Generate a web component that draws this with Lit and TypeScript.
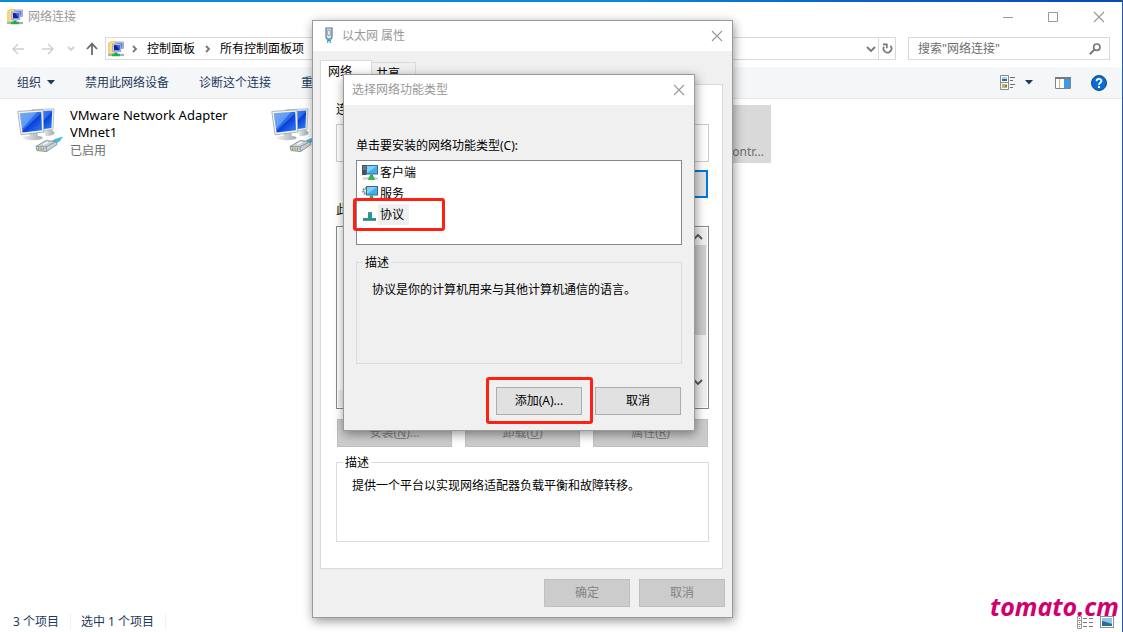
import { LitElement, html, css, svg, nothing } from "lit";
import { customElement, property } from "lit/decorators.js";

const chevron = (d: string, cls: string, w = 8, h = 8) => html`
  <svg class=${cls} width=${w} height=${h} viewBox="0 0 ${w} ${h}" aria-hidden="true">
    <path d=${d} fill="none" stroke="currentColor" stroke-width="1.8" />
  </svg>`;

const folderIcon = html`
  <svg width="16" height="16" viewBox="0 0 16 16" aria-hidden="true">
    <path d="M0.5 1.5 L4 .5 V12.5 L.5 13.5Z" fill="#e9c85b" />
    <path d="M3 .5 H8 V13 H1 V2Z" fill="#f6e08a" stroke="#d9bb55" stroke-width=".6" />
    <rect x="8" y="1" width="7.5" height="6.5" fill="#c9d2ea" stroke="#8793b5" stroke-width=".7" />
    <rect x="9.5" y="2.2" width="5" height="4.4" fill="#5b7bdc" />
    <rect x="4.8" y="3" width="8" height="7.4" fill="#d6ddf0" stroke="#7c88aa" stroke-width=".7" />
    <rect x="6" y="4" width="5.6" height="5.4" fill="#1020b8" />
    <path d="M8 4 H11.6 V9Z" fill="#3a63ea" />
    <rect x="7" y="10" width="3" height="2" fill="#c3cadb" />
    <path d="M0 14 H16" stroke="#a9b0b5" stroke-width="2.2" />
    <path d="M4 14 H12" stroke="#19b662" stroke-width="2.4" />
    <path d="M8 11.6 V15" stroke="#19a657" stroke-width="3" />
  </svg>`;

const adapterIcon = html`
  <svg width="46" height="46" viewBox="0 0 46 46" aria-hidden="true">
    <defs>
      <linearGradient id="scr" x1="0" y1="0" x2="1" y2="1">
        <stop offset="0" stop-color="#4f8ff2" />
        <stop offset=".5" stop-color="#2a6bec" />
        <stop offset=".54" stop-color="#0b3fd6" />
        <stop offset="1" stop-color="#2f8af8" />
      </linearGradient>
      <linearGradient id="stand" x1="0" y1="0" x2="1" y2="0">
        <stop offset="0" stop-color="#eef0f1" />
        <stop offset="1" stop-color="#a4a9ae" />
      </linearGradient>
    </defs>
    <path d="M26 24 L34 21 L37 24 C39 26 35 28 29 28Z" fill="url(#stand)" />
    <path d="M15 1.8 L37 .8 L36 21.5 L18 24Z" fill="#eceeef" stroke="#a5abb0" stroke-width=".7" />
    <path d="M17 3.6 L35.2 2.6 L34.4 20 L19 22Z" fill="url(#scr)" />
    <path d="M12 24 L20 23 L21 28 C28 28.6 27 31.6 19 32 C9 32.8 4 31 6 28.8 L13 27.6Z" fill="url(#stand)" />
    <path d="M.8 3.4 L26 1.8 L26.8 24 L4 26.8Z" fill="#f3f4f5" stroke="#9aa1a7" stroke-width=".8" />
    <path d="M2.8 5.2 L24.2 3.8 L25 22.2 L5.6 24.6Z" fill="url(#scr)" />
    <path d="M2.8 5.2 L20 4 L6 20 L5 20Z" fill="#b5dcff" opacity=".38" />
    <path d="M33 34 L38 31 L46 28.6 L43 33 L38 36Z" fill="#45b9e6" />
    <path d="M19 38.4 L29 32.6 L39 33.4 L40 36.5 L29.6 43.6 L20 42.6Z" fill="#c9d1d7" stroke="#7a868f" stroke-width=".8" />
    <path d="M19 38.4 L29 38.8 L39 33.6 M29 38.8 L29.6 43.4" fill="none" stroke="#7f8b94" stroke-width=".8" />
    <path d="M21.6 39.6 V42 M24 39.8 V42.2 M26.4 40 V42.6" stroke="#b0963a" stroke-width="1.1" />
    <path d="M26 36.6 L31 34" stroke="#f4f7f8" stroke-width="1.5" />
  </svg>`;

const plugIcon = html`
  <svg width="12" height="18" viewBox="0 0 12 18" aria-hidden="true">
    <path d="M3 1 H9 V10 L8 12 H4 L3 10Z" fill="#dbe6f0" stroke="#5d7388" stroke-width="1.2" />
    <rect x="4.8" y="3.2" width="2.4" height="5" fill="#fff" stroke="#6f8ba5" stroke-width=".8" />
    <path d="M4 12.5 H8 V14 H4Z" fill="#2f7fae" />
    <path d="M4.7 13 V16 M7.3 13 V16" stroke="#3fb2da" stroke-width="1.4" />
  </svg>`;

const screen = svg`
  <rect x="4.5" y=".5" width="11" height="8.5" fill="#3fb0f2" stroke="#3c6a85" stroke-width="1" />
  <path d="M5 1 H15 L5 8Z" fill="#7fd0fa" />
  <path d="M8 9.5 V12 H11 V9.5Z" fill="#2fa64a" />
  <path d="M7 11.5 H12 L13 15 H6Z" fill="#39b551" />`;

const featureIcons: Record<string, unknown> = {
  client: html`<svg width="16" height="16" viewBox="0 0 16 16" aria-hidden="true">
    <rect x="0" y="0" width="4.5" height="10" fill="#4a5257" />
    <path d="M1 2 H4 M1 4 H4" stroke="#9fb4bd" stroke-width=".8" />
    <rect x="1" y="12.5" width="15" height="2" fill="#c9cccd" />
    ${screen}
  </svg>`,
  service: html`<svg width="16" height="16" viewBox="0 0 16 16" aria-hidden="true">
    <circle cx="4" cy="5" r="3" fill="none" stroke="#8b979e" stroke-width="2" stroke-dasharray="1.6 1" />
    <circle cx="4" cy="5" r="2.2" fill="#eef1f2" stroke="#8b979e" />
    <rect x="1" y="12.5" width="15" height="2" fill="#c9cccd" />
    ${screen}
  </svg>`,
  protocol: html`<svg width="16" height="16" viewBox="0 0 16 16" aria-hidden="true">
    <path d="M6 5 H10 V11 H14 V13.5 H1 V11 H6Z" fill="#219a91" />
    <path d="M6 5 H10 V6.5 H6Z" fill="#5a8b97" />
    <path d="M1 12.4 H14 V13.6 H1Z" fill="#3f7890" />
  </svg>`,
};

const shared = css`
  * { box-sizing: border-box; }
  button, input {
    font: inherit;
    color: inherit;
    margin: 0;
    padding: 0;
    border: 0;
    border-radius: 0;
    background: none;
  }
  svg { display: block; flex: none; }
`;

@customElement("dialog-window")
class DialogWindow extends LitElement {
  @property() heading = "";
  @property({ type: Boolean }) plug = false;

  static styles = [shared, css`
    :host {
      display: block;
      border: 1px solid #9a9a9a;
      background: #f0f0f0;
      box-shadow: 1px 3px 10px rgba(0, 0, 0, 0.42);
    }
    .title {
      display: flex;
      align-items: center;
      gap: 7px;
      height: 30px;
      padding: 0 9px 1px 8px;
      background: #fff;
      color: #999;
    }
    .plugged { padding-left: 10px; }
    .name { flex: 1; }
    .close { display: flex; color: #999; }
  `];

  render() {
    return html`
      <header class="title ${this.plug ? "plugged" : ""}">
        ${this.plug ? plugIcon : nothing}
        <span class="name">${this.heading}</span>
        <button class="close" aria-label="关闭">
          <svg width="12" height="12" viewBox="0 0 12 12">
            <path d="M1 1 L11 11 M11 1 L1 11" stroke="currentColor" stroke-width="1.1" />
          </svg>
        </button>
      </header>
      <slot></slot>`;
  }
}

@customElement("app-root")
class AppRoot extends LitElement {
  static styles = [shared, css`
    :host {
      display: flex;
      flex-direction: column;
      position: relative;
      height: 100vh;
      overflow: hidden;
      background: #fff;
      border-right: 1px solid #2458a8;
      box-sizing: border-box;
      font: 12px/16px "Noto Sans", "Noto Sans CJK SC", sans-serif;
      color: #000;
    }
    .strip {
      flex: none;
      height: 2px;
      background: linear-gradient(90deg, #0a8bd8, #0a8ad6 55%, #0a62cc 75%, #0c48b4);
    }
    .titlebar {
      display: flex;
      align-items: center;
      flex: none;
      gap: 5px;
      height: 29px;
      padding: 0 17px 0 7px;
      color: #999;
    }
    .caption { flex: 1; }
    .sys { display: flex; gap: 34px; }
    .nav {
      display: flex;
      align-items: center;
      flex: none;
      height: 36px;
      padding: 0 12px 1px;
    }
    .moves {
      display: flex;
      align-items: center;
      color: #d0d0d0;
      margin-right: 7px;
    }
    .fwd { margin-left: 18px; }
    .recent { margin-left: 13px; }
    .up { margin-left: 11px; color: #6b6b6b; }
    .address {
      display: flex;
      align-items: center;
      flex: 1;
      height: 23px;
      border: 1px solid #d9d9d9;
      padding-left: 2px;
    }
    .crumbs { display: flex; align-items: center; flex: 1; }
    .crumb { margin: 0 9px 0 8px; color: #000; text-decoration: none; }
    .sep { color: #777; }
    .first { margin-left: 7px; }
    .drop { color: #777; margin-right: 2px; }
    .refresh {
      display: grid;
      place-items: center;
      width: 17px;
      height: 100%;
      border-left: 1px solid #d9d9d9;
      color: #777;
    }
    .search {
      display: flex;
      align-items: center;
      width: 202px;
      height: 23px;
      margin-left: 12px;
      padding: 0 8px 0 9px;
      border: 1px solid #d9d9d9;
    }
    .query { flex: 1; min-width: 0; outline: 0; }
    .query::placeholder { color: #6d6d6d; opacity: 1; }
    .toolbar {
      display: flex;
      align-items: center;
      flex: none;
      height: 32px;
      padding: 0 15px 0 17px;
      background: #f5f6f7;
      border-bottom: 1px solid #e6e9ec;
      color: #1e395b;
    }
    .commands { display: flex; flex: 1; gap: 30px; }
    .cmd { display: flex; align-items: center; gap: 6px; white-space: nowrap; }
    .views { display: flex; align-items: center; }
    .more { margin: 0 22px 0 9px; }
    .help { margin-left: 20px; }
    .files {
      display: flex;
      align-items: flex-start;
      flex: 1;
      gap: 1px;
      padding: 6px 10px;
    }
    .file {
      display: flex;
      gap: 7px;
      width: 253px;
      height: 58px;
      padding: 3px 7px;
      line-height: 17px;
    }
    .file-name { font-size: 13px; margin: -1px 0 1px; padding-right: 8px; }
    .file-state { color: #6d6d6d; }
    .picked { background: #d9d9d9; justify-content: flex-end; align-items: flex-end; }
    .status {
      display: flex;
      align-items: center;
      flex: none;
      height: 20px;
      padding: 0 8px 0 13px;
      color: #1e395b;
    }
    .count { padding-right: 11px; margin-right: 10px; border-right: 1px solid #f1f1f1; }
    .modes { display: flex; align-items: center; gap: 7px; margin-left: auto; }
    .brand {
      position: absolute;
      right: 3px;
      bottom: 12px;
      font: italic 700 25px/28px "Open Sans", "Noto Sans", sans-serif;
      color: #d1006c;
    }

    .props { position: absolute; left: 312px; top: 20px; width: 421px; }
    .feature { position: absolute; left: 343px; top: 74px; width: 352px; }

    .sheet { padding: 9px 7px 10px; }
    .tabs { display: flex; align-items: flex-end; }
    .tab {
      height: 22px;
      padding: 0 15px 0 4px;
      border: 1px solid #d9d9d9;
      border-width: 1px 1px 0 0;
    }
    .on {
      height: 25px;
      margin-bottom: -1px;
      padding: 0 19px 2px 7px;
      border-left-width: 1px;
      background: #fff;
      position: relative;
    }
    .page {
      display: flex;
      flex-direction: column;
      margin-right: 2px;
      padding: 17px 13px 26px 15px;
      border: 1px solid #d9d9d9;
      background: #fff;
    }
    .device {
      width: 100%;
      height: 38px;
      margin: 6px 0 8px;
      border: 1px solid #ccc;
    }
    .config {
      align-self: flex-end;
      width: 86px;
      height: 28px;
      margin: 0 1px 4px 0;
      border: 2px solid #0078d7;
      background: #e1e1e1;
    }
    .items {
      display: grid;
      grid-template-columns: 1fr 17px;
      grid-template-rows: 1fr 17px;
      height: 183px;
      margin-top: 8px;
      padding: 1px;
      border: 1px solid #828790;
    }
    .bar {
      display: flex;
      flex-direction: column;
      align-items: center;
      background: #f0f0f0;
      color: #555;
      padding: 5px 1px 4px 0;
    }
    .thumb { width: 100%; height: 90px; margin: 4px 0 auto; background: #cdcdcd; }
    .track { grid-column: 1 / 3; background: #f0f0f0; }
    .actions { display: grid; grid-template-columns: repeat(3, 1fr); gap: 13px; margin: 10px 1px 8px; }
    .btn {
      height: 28px;
      border: 1px solid #adadad;
      background: #e1e1e1;
      text-align: center;
    }
    .btn:disabled { border-color: #bfbfbf; background: #ccc; color: #838383; }
    .group {
      min-width: 0;
      margin: 0;
      padding: 0 6px;
      border: 1px solid #dcdcdc;
    }
    .legend { padding: 0 2px; line-height: 15px; }
    .about { margin: 0; padding: 8px 9px; }
    .page .group { height: 87px; }
    .foot { display: flex; justify-content: flex-end; gap: 9px; margin-top: 10px; }
    .foot .btn { width: 86px; }

    .picker { padding: 33px 12px 15px; }
    .options {
      list-style: none;
      height: 85px;
      margin: 6px 0 10px;
      padding: 1px 5px;
      border: 1px solid #828790;
      background: #fff;
    }
    .option { display: flex; align-items: center; height: 21px; position: relative; }
    .word { padding: 3px 5px 2px 2px; }
    .chosen .word { background: #f0f0f0; }
    .picker .group { height: 109px; }
    .picker .about { padding-top: 12px; }
    .picker .foot { gap: 13px; margin: 23px 1px 0 0; }
    .add { position: relative; }
    .mark {
      position: absolute;
      border: 3px solid #ff2014;
      border-radius: 3px;
      pointer-events: none;
    }
    .around-option { left: -9px; top: -6px; width: 92px; height: 33px; }
    .around-add { inset: -11px -12px -10px -11px; }
  `];

  private files = ["VMware Network Adapter VMnet1", "VMware Network Adapter VMnet8"];
  private features = [
    { icon: "client", name: "客户端" },
    { icon: "service", name: "服务" },
    { icon: "protocol", name: "协议", chosen: true },
  ];

  private explorer() {
    return html`
      <div class="strip"></div>
      <header class="titlebar">
        ${folderIcon}
        <span class="caption">网络连接</span>
        <div class="sys">
          <button aria-label="最小化"><svg width="11" height="12" viewBox="0 0 11 12"><path d="M0 6.5 H10" stroke="#999" /></svg></button>
          <button aria-label="最大化"><svg width="11" height="12" viewBox="0 0 11 12"><path d="M.5 1.5 H9.5 V10.5 H.5Z" fill="none" stroke="#999" /></svg></button>
          <button aria-label="关闭"><svg width="12" height="12" viewBox="0 0 12 12"><path d="M1 1 L11 11 M11 1 L1 11" stroke="#999" stroke-width="1.1" /></svg></button>
        </div>
      </header>
      <nav class="nav">
        <div class="moves">
          <button aria-label="后退"><svg width="12" height="12" viewBox="0 0 12 12"><path d="M12 6 H1 M6 1 L1 6 L6 11" fill="none" stroke="currentColor" stroke-width="1.5" /></svg></button>
          <button class="fwd" aria-label="前进"><svg width="12" height="12" viewBox="0 0 12 12"><path d="M0 6 H11 M6 1 L11 6 L6 11" fill="none" stroke="currentColor" stroke-width="1.5" /></svg></button>
          <button class="recent" aria-label="最近">${chevron("M1 2 L4 5 L7 2", "")}</button>
          <button class="up" aria-label="向上"><svg width="12" height="13" viewBox="0 0 12 13"><path d="M6 13 V2 M1 7 L6 1.6 L11 7" fill="none" stroke="currentColor" stroke-width="1.8" /></svg></button>
        </div>
        <div class="address">
          <div class="crumbs">
            ${folderIcon}
            ${chevron("M2 1 L5 4 L2 7", "sep first")}
            <a class="crumb" href="#">控制面板</a>
            ${chevron("M2 1 L5 4 L2 7", "sep")}
            <a class="crumb" href="#">所有控制面板项</a>
          </div>
          <button class="drop" aria-label="以前的位置">${chevron("M1 2 L5 6 L9 2", "", 10, 8)}</button>
          <button class="refresh" aria-label="刷新">
            <svg width="11" height="12" viewBox="0 0 11 12">
              <path d="M8.4 2.8 A4 4 0 1 1 2 3.6" fill="none" stroke="currentColor" stroke-width="1.7" />
              <path d="M1 1.4 H4.8 V5.2" fill="none" stroke="currentColor" stroke-width="1.7" />
            </svg>
          </button>
        </div>
        <label class="search">
          <input class="query" type="text" aria-label="搜索" placeholder='搜索"网络连接"' />
          <svg width="12" height="12" viewBox="0 0 12 12">
            <circle cx="7.8" cy="4.2" r="3.2" fill="none" stroke="#777" stroke-width="1.6" />
            <path d="M5.4 6.6 L.8 11.2" stroke="#777" stroke-width="2" />
          </svg>
        </label>
      </nav>
      <div class="toolbar">
        <div class="commands">
          <button class="cmd">组织 <svg width="8" height="5" viewBox="0 0 8 5"><path d="M0 0 H8 L4 4.6Z" fill="#1e395b" /></svg></button>
          <button class="cmd">禁用此网络设备</button>
          <button class="cmd">诊断这个连接</button>
          <button class="cmd">重命名此连接</button>
        </div>
        <div class="views">
          <button aria-label="更改视图">
            <svg width="16" height="16" viewBox="0 0 16 16">
              <path d="M.5 .5 H8.5 V14.5 H.5Z M.5 7.5 H8.5" fill="#fff" stroke="#8a8a8a" />
              <rect x="2" y="2" width="5" height="4" fill="#9fd6f6" /><rect x="2" y="4" width="5" height="2" fill="#2a6ba1" />
              <rect x="2" y="9" width="5" height="4" fill="#8fcf7a" /><rect x="2" y="9" width="2" height="2" fill="#e2a33a" /><rect x="5" y="10" width="2" height="2" fill="#de5042" />
              <path d="M10 2.5 H15 M10 5.5 H13 M10 9.5 H15 M10 12.5 H13" stroke="#6e6e6e" />
            </svg>
          </button>
          <button class="more" aria-label="更多选项"><svg width="8" height="5" viewBox="0 0 8 5"><path d="M0 0 H8 L4 4.6Z" fill="#1e395b" /></svg></button>
          <button aria-label="预览窗格">
            <svg width="16" height="12" viewBox="0 0 16 12">
              <path d="M.5 .5 H15.5 V11.5 H.5Z" fill="#fff" stroke="#838383" />
              <path d="M0 1 H16" stroke="#7a7a7a" stroke-width="2" />
              <path d="M4.5 2 V11" stroke="#bbb" />
              <rect x="9" y="2" width="6" height="9" fill="#3b9be8" />
            </svg>
          </button>
          <button class="help" aria-label="帮助">
            <svg width="16" height="16" viewBox="0 0 16 16">
              <circle cx="8" cy="8" r="7.5" fill="#0a6cd6" stroke="#0b4a94" />
              <path d="M5.6 6.2 C5.6 3.2 10.4 3.2 10.4 6 C10.4 7.8 8 7.8 8 10" fill="none" stroke="#fff" stroke-width="1.8" />
              <rect x="7" y="11" width="2" height="2" fill="#fff" />
            </svg>
          </button>
        </div>
      </div>
      <main class="files">
        ${this.files.map((name) => html`
          <div class="file">
            ${adapterIcon}
            <div>
              <div class="file-name">${name}</div>
              <div class="file-state">已启用</div>
            </div>
          </div>`)}
        <div class="file picked"><span class="file-state">Family Contr...</span></div>
      </main>
      <footer class="status">
        <span class="count">3 个项目</span>
        <span class="count">选中 1 个项目</span>
        <div class="modes">
          <button aria-label="详细信息">
            <svg width="16" height="13" viewBox="0 0 16 13">
              <path d="M.5 .5 H4.5 V12.5 H.5Z M.5 4.5 H4.5 M.5 8.5 H4.5" fill="#fff" stroke="#999" />
              <path d="M2 2.5 H3 M2 6.5 H3 M2 10.5 H3" stroke="#d05a4a" />
              <path d="M6 2.5 H10 M12 2.5 H16 M6 6.5 H10 M12 6.5 H16 M6 10.5 H10 M12 10.5 H16" stroke="#777" />
            </svg>
          </button>
          <button aria-label="大图标">
            <svg width="14" height="12" viewBox="0 0 14 12">
              <rect x=".5" y=".5" width="13" height="11" fill="#fff" stroke="#8f8f8f" />
              <rect x="2" y="2" width="10" height="8" fill="#8cc6ee" />
              <path d="M2 5 L6 6 L12 8 V10 H2Z" fill="#2a6b8f" />
            </svg>
          </button>
        </div>
      </footer>
      <div class="brand">tomato.cm</div>`;
  }

  private properties() {
    return html`
      <dialog-window class="props" heading="以太网 属性" plug>
        <div class="sheet">
          <div class="tabs" role="tablist">
            <button class="tab on" role="tab" aria-selected="true">网络</button>
            <button class="tab" role="tab" aria-selected="false">共享</button>
          </div>
          <div class="page">
            <label for="device">连接时使用:</label>
            <input class="device" id="device" readonly />
            <button class="config" aria-label="配置"></button>
            <span id="items-label">此连接使用下列项目(O):</span>
            <div class="items" role="group" aria-labelledby="items-label">
              <div></div>
              <div class="bar">
                ${chevron("M1 6 L5 2 L9 6", "", 10, 8)}
                <div class="thumb"></div>
                ${chevron("M1 2 L5 6 L9 2", "", 10, 8)}
              </div>
              <div class="track"></div>
            </div>
            <div class="actions">
              <button class="btn" disabled>安装(<u>N</u>)...</button>
              <button class="btn" disabled>卸载(<u>U</u>)</button>
              <button class="btn" disabled>属性(<u>R</u>)</button>
            </div>
            <fieldset class="group">
              <legend class="legend">描述</legend>
              <p class="about">提供一个平台以实现网络适配器负载平衡和故障转移。</p>
            </fieldset>
          </div>
          <div class="foot">
            <button class="btn" disabled>确定</button>
            <button class="btn" disabled>取消</button>
          </div>
        </div>
      </dialog-window>`;
  }

  private chooser() {
    return html`
      <dialog-window class="feature" heading="选择网络功能类型">
        <div class="picker">
          <div id="feature-label">单击要安装的网络功能类型(C):</div>
          <ul class="options" role="listbox" aria-labelledby="feature-label">
            ${this.features.map((f) => html`
              <li class="option ${f.chosen ? "chosen" : ""}" role="option" aria-selected=${f.chosen ? "true" : "false"}>
                ${featureIcons[f.icon]}
                <span class="word">${f.name}</span>
                ${f.chosen ? html`<span class="mark around-option"></span>` : nothing}
              </li>`)}
          </ul>
          <fieldset class="group">
            <legend class="legend">描述</legend>
            <p class="about">协议是你的计算机用来与其他计算机通信的语言。</p>
          </fieldset>
          <div class="foot">
            <button class="btn add">添加(A)...<span class="mark around-add"></span></button>
            <button class="btn">取消</button>
          </div>
        </div>
      </dialog-window>`;
  }

  render() {
    return html`${this.explorer()}${this.properties()}${this.chooser()}`;
  }
}
